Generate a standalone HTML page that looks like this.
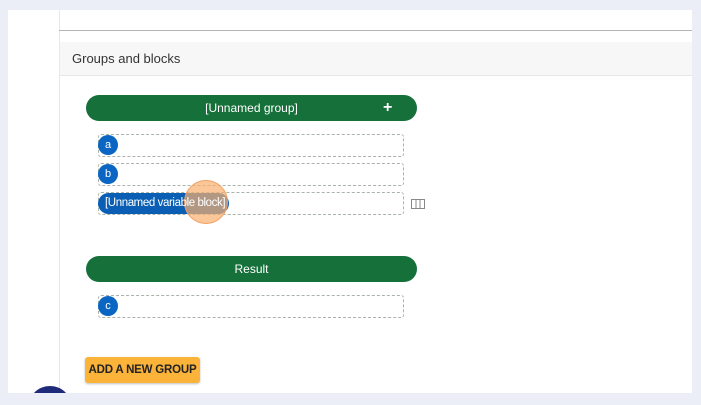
<!DOCTYPE html>
<html style="overflow:hidden;height:405px"><head><style>
body{margin:0;width:701px;height:405px;background:#eceef7;position:relative;overflow:hidden;font-family:"Liberation Sans",sans-serif}
.a{position:absolute}
.row{position:absolute;left:98px;width:304px;height:21px;border:1px dashed #a9b3a9;border-radius:3px;background:#fff}
.c{position:absolute;left:-1px;top:0px;width:20px;height:20px;border-radius:50%;background:#0a66c2;color:#fff;font-size:11px;text-align:center;line-height:20px}
.bar{position:absolute;left:86px;width:331px;height:26px;border-radius:13px;background:#16703a;color:#fff;font-size:12px;text-align:center;line-height:26px}
</style></head><body>
<div class="a" style="left:8px;top:10px;width:684px;height:383px;background:#fff;overflow:hidden">
<div class="a" style="left:51px;top:0;width:1px;height:383px;background:#e8e8e8"></div>
<div class="a" style="left:51px;top:20px;width:633px;height:1px;background:#b5b5b5"></div>
<div class="a" style="left:52px;top:32px;width:632px;height:33px;background:#f7f7f7;border-bottom:1px solid #e6e6e6"></div>
<div class="a" style="left:64px;top:41px;font-size:13px;color:#333">Groups and blocks</div>
<div class="a" style="left:20px;top:376px;width:44px;height:7px;overflow:hidden"><div style="width:44px;height:44px;border-radius:50%;background:#1e2a7a"></div></div>
</div>
<div class="bar" style="top:95px">[Unnamed group]<span class="a" style="left:297px;top:0;font-size:16px;font-weight:bold">+</span></div>
<div class="row" style="top:134px"><div class="c">a</div></div>
<div class="row" style="top:163px"><div class="c">b</div></div>
<div class="row" style="top:192px"><div class="a" style="left:-1px;top:0;width:131px;height:21px;border-radius:11px;background:#0a5fb5"></div></div>
<div class="a" style="left:184px;top:180px;width:42px;height:42px;border-radius:50%;background:rgba(250,175,110,0.7);border:1px solid #f0a060"></div>
<div class="a" style="left:105px;top:193px;height:21px;line-height:21px;font-size:11.5px;color:#fff;white-space:nowrap;letter-spacing:-0.4px">[Unnamed variable block]</div>
<svg class="a" style="left:411px;top:199px" width="14" height="11"><rect x="0.5" y="0.5" width="13" height="9" fill="none" stroke="#888"/><line x1="5" y1="1" x2="5" y2="10" stroke="#888"/><line x1="9" y1="1" x2="9" y2="10" stroke="#888"/></svg>
<div class="bar" style="top:256px">Result</div>
<div class="row" style="top:295px"><div class="c">c</div></div>
<div class="a" style="left:85px;top:357px;width:115px;height:26px;background:#fbb33a;border-radius:3px;box-shadow:0 1px 2px rgba(0,0,0,.25);font-size:11.5px;font-weight:bold;color:#222;text-align:center;line-height:26px;letter-spacing:-0.2px">ADD A NEW GROUP</div>
</body></html>
